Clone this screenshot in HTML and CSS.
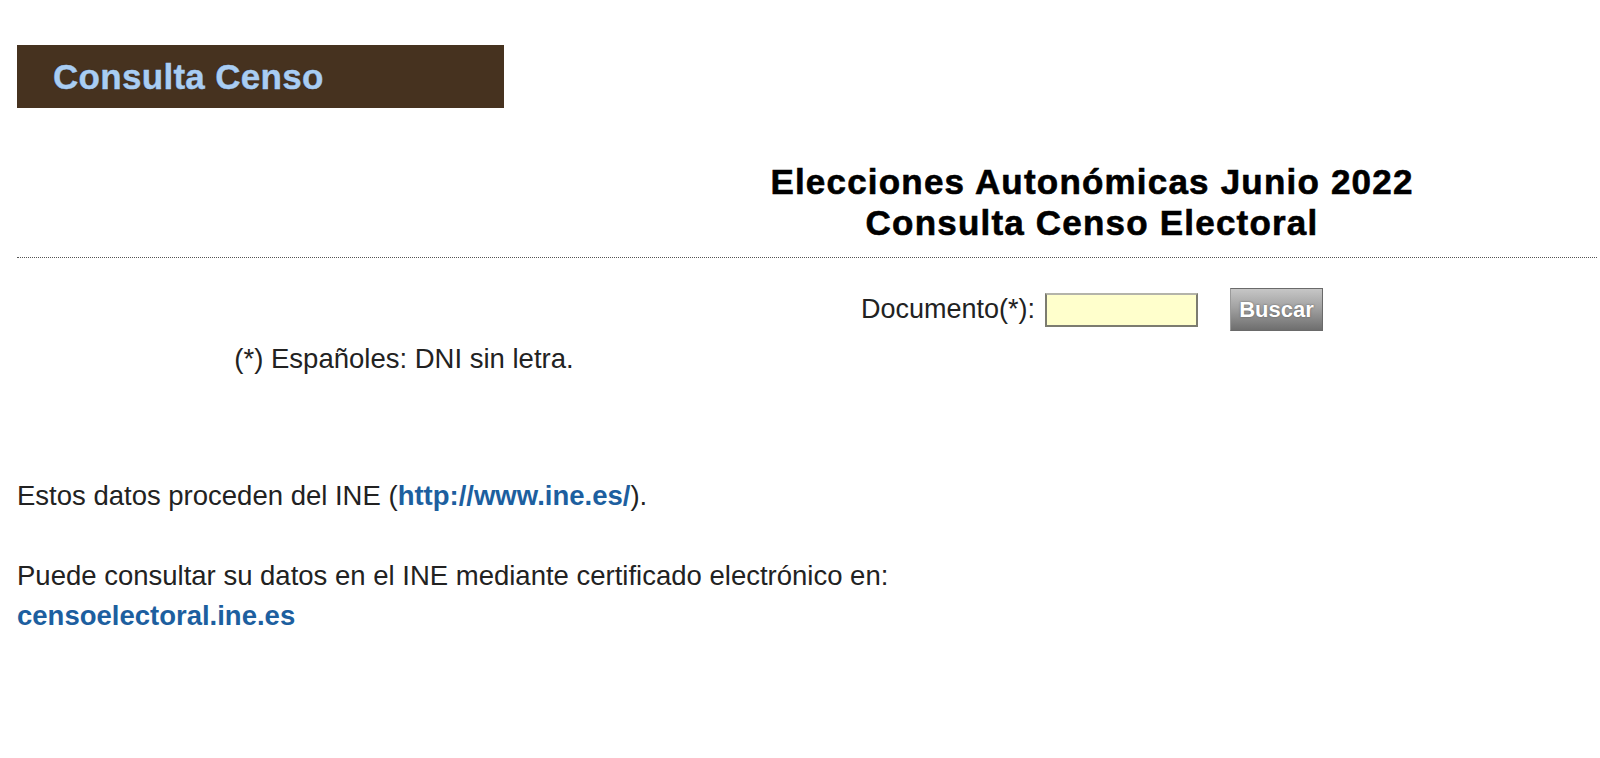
FILE: index.html
```html
<!DOCTYPE html>
<html lang="es">
<head>
<meta charset="utf-8">
<title>Consulta Censo</title>
<link rel="stylesheet" href="styles.css">
</head>
<body>
<div class="page">
  <div class="banner"><span class="banner-title">Consulta Censo</span></div>

  <div class="heading-grid">
    <div class="heading-cell">
      <h1 class="heading">Elecciones Autonómicas Junio 2022<br>Consulta Censo Electoral</h1>
    </div>
  </div>

  <hr class="sep">

  <form class="consulta" onsubmit="return false;">
    <div class="cell-empty"></div>
    <div class="form-row">
      <label class="doc-label" for="doc">Documento(*):</label>
      <input class="doc-input" id="doc" type="text">
      <button class="btn-buscar" type="submit">Buscar</button>
    </div>
    <div class="nota">(*) Españoles: DNI sin letra.</div>
    <div class="cell-empty"></div>
  </form>

  <p class="info first">Estos datos proceden del INE (<a class="link" href="#">http://www.ine.es/</a>).</p>
  <p class="info second">Puede consultar su datos en el INE mediante certificado electrónico en:<br><a class="link" href="#">censoelectoral.ine.es</a></p>
</div>
</body>
</html>
```

FILE: styles.css
```css
html, body {
  margin: 0;
  padding: 0;
  background: #ffffff;
}

body {
  font-family: "Liberation Sans", Arial, sans-serif;
  color: #222222;
  font-size: 27.5px;
}

.page {
  padding: 45px 3px 0 17px;
}

.banner {
  width: 451px;
  height: 63px;
  padding-left: 36px;
  background: #46321f;
}

.banner-title {
  display: block;
  font-size: 35px;
  line-height: 63px;
  font-weight: bold;
  letter-spacing: 0.3px;
  color: #a9cdf3;
  -webkit-text-stroke: 0.4px #a9cdf3;
  text-shadow: 0 0 1px #1d2a3a;
}

.heading-grid {
  display: grid;
  grid-template-columns: 774px 602px;
  margin-top: 53px;
}

.heading-cell {
  grid-column: 2;
  display: flex;
  justify-content: center;
}

.heading {
  margin: 0;
  white-space: nowrap;
  text-align: center;
  font-size: 35px;
  line-height: 41px;
  font-weight: bold;
  letter-spacing: 1.2px;
  color: #000000;
  -webkit-text-stroke: 0.6px #000000;
}

.sep {
  margin: 14px 0 0 0;
  border: 0;
  border-top: 1px dotted #555555;
  height: 0;
}

.consulta {
  display: grid;
  grid-template-columns: 774px 602px;
  margin-top: 30px;
}

.form-row {
  display: flex;
  align-items: center;
  justify-content: center;
  height: 43px;
}

.doc-label {
  font-size: 27px;
  line-height: 31px;
}

.doc-input {
  box-sizing: border-box;
  width: 153px;
  height: 34px;
  margin: 0 0 0 10px;
  padding: 0 4px;
  background: #ffffcc;
  border: 2px solid #7c7c70;
  border-top-color: #b4b4aa;
  font-family: "Liberation Sans", Arial, sans-serif;
  font-size: 22px;
}

.btn-buscar {
  box-sizing: border-box;
  width: 93px;
  height: 43px;
  margin: 0 0 0 32px;
  padding: 0;
  border: 1px solid #6a6a6a;
  border-left-color: #9a9a9a;
  background: linear-gradient(to bottom, #c6c6c6 0%, #a2a2a2 45%, #6e6e6e 100%);
  color: #ffffff;
  font-family: "Liberation Sans", Arial, sans-serif;
  font-size: 22px;
  font-weight: bold;
  text-shadow: 0 0 2px #555555;
}

.nota {
  margin-top: 12px;
  text-align: center;
  font-size: 27.5px;
  line-height: 31px;
}

.info {
  margin: 0;
  font-size: 27.5px;
}

.info.first {
  margin-top: 106px;
  line-height: 31px;
}

.info.second {
  margin-top: 45px;
  line-height: 40px;
}

.link {
  color: #1d5f9f;
  font-weight: bold;
  text-decoration: none;
}
```
